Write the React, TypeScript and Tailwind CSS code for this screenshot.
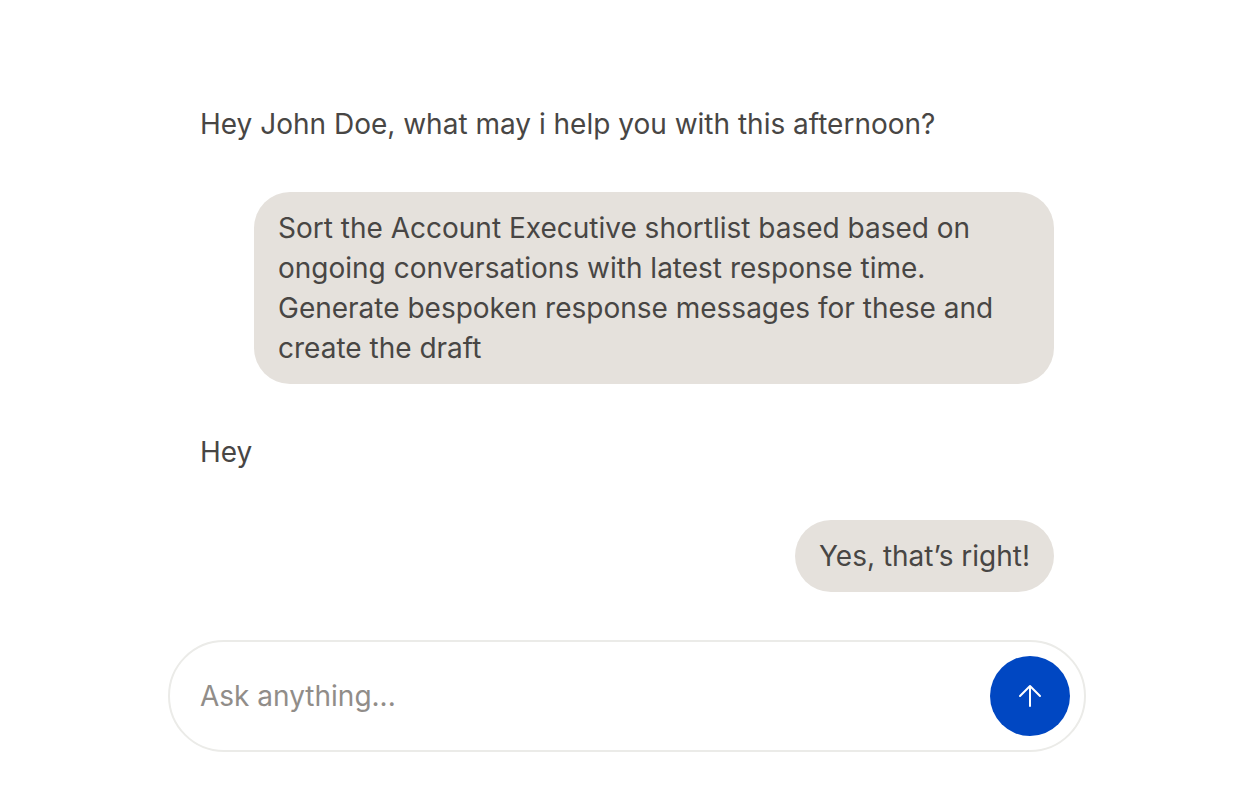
import { useState } from "react";

type Message = {
	from: "assistant" | "user";
	text: string;
};

const messages: Message[] = [
	{
		from: "assistant",
		text: "Hey John Doe, what may i help you with this afternoon?",
	},
	{
		from: "user",
		text: "Sort the Account Executive shortlist based based on ongoing conversations with latest response time. Generate bespoken response messages for these and create the draft",
	},
	{ from: "assistant", text: "Hey" },
	{ from: "user", text: "Yes, that’s right!" },
];

function ChatMessage({ from, text }: Message) {
	if (from === "user") {
		return (
			<p className="max-w-[800px] self-end rounded-[36px] bg-[#e5e1dc] px-6 py-4">
				{text}
			</p>
		);
	}

	return <p>{text}</p>;
}

function ArrowUpIcon() {
	return (
		<svg
			width="24"
			height="24"
			viewBox="0 0 24 24"
			fill="none"
			stroke="currentColor"
			strokeWidth="2"
			strokeLinecap="round"
			strokeLinejoin="round"
			aria-hidden="true"
		>
			<path d="M12 22V2M2 12L12 2L22 12" />
		</svg>
	);
}

export default function App() {
	const [prompt, setPrompt] = useState("");

	return (
		<div className="min-h-screen bg-white px-4 pt-[104px] pb-[38px] font-['Inter',sans-serif] text-[28px] leading-10 text-[#484644] antialiased">
			<main className="mx-auto w-full max-w-[918px]">
				<div className="flex flex-col gap-12 px-8">
					{messages.map((message) => (
						<ChatMessage key={message.text} {...message} />
					))}
				</div>
				<form
					className="mt-12 flex items-center rounded-full border-2 border-[#ebebe8] py-[14px] pr-[14px] pl-[30px]"
					onSubmit={(e) => e.preventDefault()}
				>
					<input
						type="text"
						aria-label="Ask anything"
						placeholder="Ask anything..."
						className="min-w-0 flex-1 bg-transparent outline-none placeholder:text-[#918d89]"
						value={prompt}
						onChange={(e) => setPrompt(e.target.value)}
					/>
					<button
						type="submit"
						aria-label="Send"
						className="flex size-20 items-center justify-center rounded-full bg-[#0047c2] text-white"
					>
						<ArrowUpIcon />
					</button>
				</form>
			</main>
		</div>
	);
}
